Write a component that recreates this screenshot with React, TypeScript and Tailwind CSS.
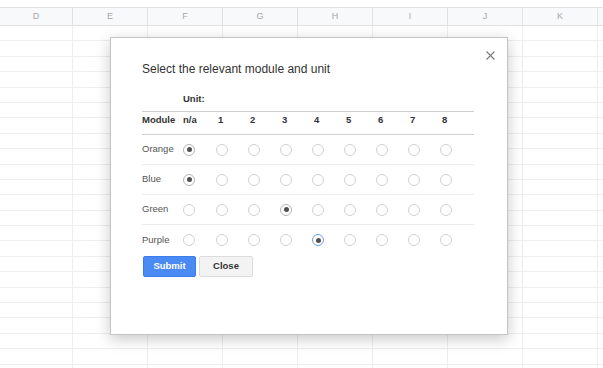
import React from 'react';

const COLS = ['D', 'E', 'F', 'G', 'H', 'I', 'J', 'K', ''];
const WIDTHS = ['w-[73px]', 'w-[75px]', 'w-[75px]', 'w-[75px]', 'w-[75px]', 'w-[75px]', 'w-[75px]', 'w-[75px]', 'w-[30px]'];
const ROWS = Array.from({ length: 23 }, (_, i) => i);

const UNIT_COLS = ['w-[33px]', 'w-[32px]', 'w-[32px]', 'w-[32px]', 'w-[32px]', 'w-[32px]', 'w-[32px]', 'w-[32px]', 'w-[34px]'];
const HEAD = ['n/a', '1', '2', '3', '4', '5', '6', '7', '8'];

const MODULES: { name: string; sel: number; focus?: boolean }[] = [
  { name: 'Orange', sel: 0 },
  { name: 'Blue', sel: 0 },
  { name: 'Green', sel: 3 },
  { name: 'Purple', sel: 4, focus: true },
];

function Radio({ checked, focus }: { checked: boolean; focus?: boolean }) {
  const border = focus ? 'border-[#6a9ff5]' : checked ? 'border-[#b5b5b5]' : 'border-[#d2d2d2]';
  return (
    <span className={`flex h-[12px] w-[12px] items-center justify-center rounded-full border bg-white ${border}`}>
      {checked && <span className="h-[5px] w-[5px] rounded-full bg-[#505050]" />}
    </span>
  );
}

export default function App() {
  return (
    <div className="relative h-[368px] w-[603px] overflow-hidden bg-white font-['Liberation_Sans',Arial,sans-serif]">
      {/* spreadsheet */}
      <div className="pt-[7px]">
        <div className="flex h-[19px] border-y border-[#e2e2e2] bg-[#f8f9fa]">
          {COLS.map((c, i) => (
            <div
              key={i}
              className={`flex shrink-0 items-center justify-center border-r border-[#e2e2e2] text-[9px] text-[#a6a6a6] ${WIDTHS[i]}`}
            >
              {c}
            </div>
          ))}
        </div>
        {ROWS.map((r) => (
          <div key={r} className="flex h-[15.4px] border-b border-[#eeeeee]">
            {COLS.map((_, i) => (
              <div key={i} className={`shrink-0 border-r border-[#eeeeee] ${WIDTHS[i]}`} />
            ))}
          </div>
        ))}
      </div>

      {/* dialog */}
      <div className="absolute left-[110px] top-[37px] flex h-[298px] w-[398px] flex-col border border-[#c4c4c4] bg-white pl-[31px] shadow-[0_4px_14px_rgba(0,0,0,0.22)]">
        <button className="absolute right-[12px] top-[13px] text-[#777]" aria-label="close">
          <svg width="9" height="9" viewBox="0 0 9 9">
            <path d="M0.5 0.5 L8.5 8.5 M8.5 0.5 L0.5 8.5" stroke="#7a7a7a" strokeWidth="1.1" fill="none" />
          </svg>
        </button>

        <div className="mt-[24px] text-[12px] leading-[14px] text-[#333]">Select the relevant module and unit</div>

        <div className="w-[332px]">
          <div className="mt-[17px] flex h-[18px] text-[9.5px] font-bold leading-[12px] text-[#333]">
            <div className="w-[41px] shrink-0" />
            <div>Unit:</div>
          </div>
          <div className="flex h-[24px] border-y border-[#cfcfcf] pt-[2px] text-[9.5px] font-bold leading-[12px] text-[#333]">
            <div className="w-[41px] shrink-0">Module</div>
            {HEAD.map((h, i) => (
              <div key={h} className={`shrink-0 ${UNIT_COLS[i]} ${i > 0 ? 'pl-[2px]' : ''}`}>
                {h}
              </div>
            ))}
          </div>
          {MODULES.map((m, mi) => (
            <div
              key={m.name}
              className={`flex h-[30px] items-center text-[9.5px] text-[#555] ${mi < MODULES.length - 1 ? 'border-b border-[#ececec]' : ''}`}
            >
              <div className="w-[41px] shrink-0">{m.name}</div>
              {HEAD.map((h, i) => (
                <div key={h} className={`flex shrink-0 ${UNIT_COLS[i]}`}>
                  <Radio checked={m.sel === i} focus={m.sel === i && m.focus} />
                </div>
              ))}
            </div>
          ))}
          <div className="mt-[1px] flex gap-[3px] pl-[1px]">
            <button className="h-[21px] w-[53px] rounded-[2px] border border-[#3b7ee8] bg-[#4a8af4] text-[9.5px] font-bold text-white">
              Submit
            </button>
            <button className="h-[21px] w-[54px] rounded-[2px] border border-[#dcdcdc] bg-[#f3f3f3] text-[9.5px] font-bold text-[#333]">
              Close
            </button>
          </div>
        </div>
      </div>
    </div>
  );
}
